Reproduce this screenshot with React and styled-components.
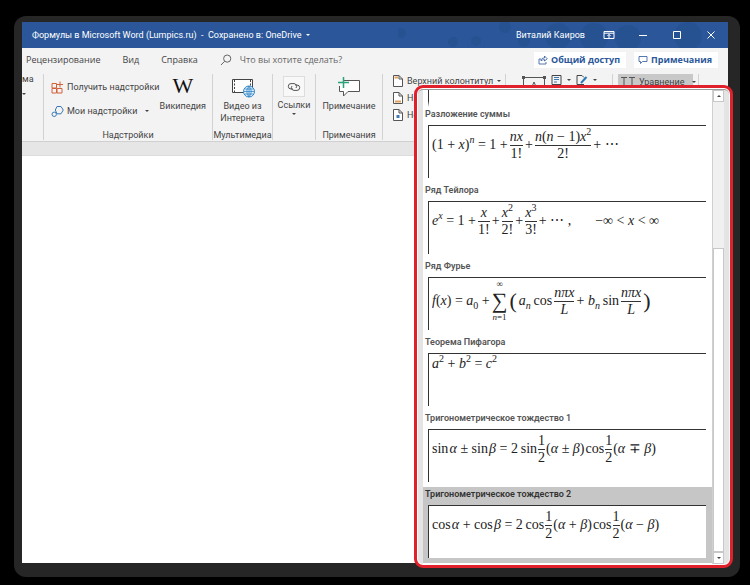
import styled, { createGlobalStyle } from "styled-components";

const tabs = ["Рецензирование", "Вид", "Справка"];

export default function App(){
    return(
    <>
        <GlobalStyle/>
        <Desktop>
            <Shadow>
                <Window>
                    <TitleBar/>
                    <TabBar/>
                    <Ribbon/>
                    <Ruler/>
                    <Page/>
                    <Gallery/>
                </Window>
            </Shadow>
        </Desktop>
    </>
    )
}

function TitleBar(){
    return(
    <Title>
        <Pattern viewBox="0 0 330 26" preserveAspectRatio="xMaxYMin slice">
            <circle cx="3" cy="11" r="5"/>
            <circle cx="55" cy="20" r="5"/>
            <circle cx="78" cy="19" r="5"/>
            <circle cx="107" cy="5" r="6"/>
            <circle cx="126" cy="19" r="6"/>
            <circle cx="160" cy="14" r="13"/>
            <circle cx="196" cy="15" r="14"/>
            <circle cx="230" cy="16" r="13"/>
            <circle cx="290" cy="14" r="14"/>
        </Pattern>
        <DocName>Формулы в Microsoft Word (Lumpics.ru)&nbsp; -&nbsp; Сохранено в: OneDrive <Caret/></DocName>
        <UserName>Виталий Каиров</UserName>
        <TitleButton aria-label="Параметры отображения ленты">
            <svg width="12" height="10" viewBox="0 0 12 10" fill="none" stroke="currentColor">
                <path d="M1 1.5h10v7H1zM1 3.2h10M6 8V4.5M4.4 6L6 4.4 7.6 6"/>
            </svg>
        </TitleButton>
        <TitleButton aria-label="Свернуть">
            <svg width="10" height="10" viewBox="0 0 10 10" stroke="currentColor"><path d="M1 5.5h8"/></svg>
        </TitleButton>
        <TitleButton aria-label="Развернуть">
            <svg width="10" height="10" viewBox="0 0 10 10" fill="none" stroke="currentColor"><path d="M1.5 1.5h7v7h-7z"/></svg>
        </TitleButton>
        <TitleButton aria-label="Закрыть">
            <svg width="10" height="10" viewBox="0 0 10 10" stroke="currentColor"><path d="M1.5 1.5l7 7M8.5 1.5l-7 7"/></svg>
        </TitleButton>
    </Title>
    )
}

function TabBar(){
    return(
    <Tabs>
        {tabs.map((tab) => <Tab key={tab}>{tab}</Tab>)}
        <Search>
            <svg width="12" height="12" viewBox="0 0 12 12" fill="none" stroke="#666"><circle cx="7.2" cy="4.6" r="3.6"/><path d="M4.6 7.3L1 11"/></svg>
            <input aria-label="Поиск" placeholder="Что вы хотите сделать?"/>
        </Search>
        <ShareButton>
            <svg width="10" height="10" viewBox="0 0 10 10" fill="none" stroke="currentColor" strokeWidth=".8"><path d="M3 4H1v5h7V7M3 6c0-2 1-3 3.500-3V1L9.300 3.800 6.500 6V4.600C5 4.600 4 5 3 6z"/></svg>
            Общий доступ
        </ShareButton>
        <ShareButton>
            <svg width="10" height="10" viewBox="0 0 10 10" fill="none" stroke="currentColor" strokeWidth=".8"><path d="M1 1.500h8v5H4.500L2.500 8.500v-2H1z"/></svg>
            Примечания
        </ShareButton>
    </Tabs>
    )
}

function PageIcon({ color, part }){
    return(
    <svg width="12" height="14" viewBox="0 0 12 14" fill="#fff" stroke="#555">
        <path d="M1.500 1.500h5.500l3.500 3.500v7.500h-9zM7 1.500V5h3.500"/>
        {part === "top" && <path d="M2.500 3.500h3.500" stroke={color} strokeWidth="2"/>}
        {part === "bottom" && <path d="M3 10.500h6" stroke={color} strokeWidth="2"/>}
        {part === "number" && <path d="M4.500 8.500h3" stroke={color} strokeWidth="3"/>}
    </svg>
    )
}

function Ribbon(){
    return(
    <RibbonBar>
        <Group $width={22}>
            <Cut>ма<Caret/></Cut>
        </Group>
        <Group $width={169}>
            <AddIns>
                <Stack $gap={10}>
                    <SmallButton>
                        <svg width="13" height="13" viewBox="0 0 13 13" fill="none" stroke="#d2603a"><path d="M1 2.500h4.500V7H1zM1 7.500h4.500V12H1zM6 7.500h5V12H6zM9 .5v6M6 3.500h6"/></svg>
                        Получить надстройки
                    </SmallButton>
                    <SmallButton>
                        <svg width="13" height="13" viewBox="0 0 13 13" fill="none" stroke="#3b78b5"><path d="M6 1.500h4L12.300 5 10 8.800H6L4.300 5z"/><circle cx="3.200" cy="9.300" r="2.200" fill="#f3f3f3"/></svg>
                        Мои надстройки
                        <Caret $left={5}/>
                    </SmallButton>
                </Stack>
                <BigButton><Wiki>W</Wiki>Википедия</BigButton>
            </AddIns>
            <GroupName>Надстройки</GroupName>
        </Group>
        <Group $width={60}>
            <BigButton>
                <svg width="24" height="22" viewBox="0 0 24 22" fill="none">
                    <path d="M1.500 3.500h20v13h-20z" fill="#fff" stroke="#444"/>
                    <path d="M3.500 4v12M19.500 4v6" stroke="#444" strokeDasharray="2 1.500"/>
                    <circle cx="18" cy="15.500" r="5.500" fill="#e8f2fb" stroke="#2e86c8"/>
                    <path d="M12.500 15.500h11M18 10v11M13.500 13h9M13.500 18h9M18 10q-4.500 5.500 0 11M18 10q4.500 5.500 0 11" stroke="#2e86c8" strokeWidth=".8"/>
                </svg>
                <span>Видео из<br/>Интернета</span>
            </BigButton>
            <GroupName>Мультимедиа</GroupName>
        </Group>
        <Group $width={43}>
            <BigButton>
                <LinkBox>
                    <svg width="14" height="10" viewBox="0 0 14 10" fill="none" stroke="#555"><path d="M6 7H4a2.700 2.700 0 010-5.400h3A2.700 2.700 0 019 6M8 3h2a2.700 2.700 0 010 5.400H7A2.700 2.700 0 015 4"/></svg>
                </LinkBox>
                Ссылки
                <Caret/>
            </BigButton>
        </Group>
        <Group $width={67}>
            <BigButton>
                <svg width="24" height="22" viewBox="0 0 24 22" fill="none">
                    <path d="M7 4.500h15.500v11H11L6.500 20v-4.500h-4V10" fill="#fff" stroke="#555"/>
                    <path d="M6.500 1v11M1 6.500h11" stroke="#29a37a" strokeWidth="1.500"/>
                </svg>
                Примечание
            </BigButton>
            <GroupName>Примечания</GroupName>
        </Group>
        <Group $width={123}>
            <Stack $gap={3}>
                <SmallButton><PageIcon part="top" color="#e0a060"/>Верхний колонтитул<Caret $left={1}/></SmallButton>
                <SmallButton><PageIcon part="bottom" color="#e0a060"/>Нижний колонтитул<Caret $left={1}/></SmallButton>
                <SmallButton><PageIcon part="number" color="#3b78b5"/>Номер страницы<Caret $left={1}/></SmallButton>
            </Stack>
            <GroupName>Колонтитулы</GroupName>
        </Group>
        <Group $width={107}>
            <TextTools>
                <svg width="24" height="20" viewBox="0 0 24 20" fill="none" stroke="#555"><path d="M1.500 3.500h21v14h-21zM9 15l3-7 3 7M10 12h4"/><path d="M0 2h3v3H0zM21 2h3v3h-3z" fill="#555" stroke="none"/></svg>
                <svg width="11" height="12" viewBox="0 0 11 12" fill="none" stroke="#444"><path d="M1 1.500h9v9H1z"/><path d="M3 3.500h5M3 5.500h5M3 8h3" stroke="#3b78b5"/></svg>
                <Caret/>
                <svg width="12" height="12" viewBox="0 0 12 12" fill="none" stroke="#444"><path d="M8 10.500H1v-9h5l2 2"/><path d="M10.500 3L5 9" stroke="#2e78b5" strokeWidth="2"/></svg>
                <Caret/>
            </TextTools>
        </Group>
        <Group $width={86}>
            <Equation>
                <svg width="14" height="11" viewBox="0 0 14 11" fill="none" stroke="#555"><path d="M0 1.500h6M3 2v8.500M1.500 10.500h3M8 1.500h6M11 2v8.500M9.500 10.500h3"/></svg>
                Уравнение
                <Caret $left={4}/>
            </Equation>
        </Group>
    </RibbonBar>
    )
}

const Frac = ({ top, bottom }) => <Fraction><span>{top}</span><span>{bottom}</span></Fraction>;
const X = () => <i>x</i>;
const AngleSum = ({ sign }) => <span>(<i>α</i> {sign} <i>β</i>)</span>;

const formulas = [
    {
        name: "Разложение суммы",
        body: () => <>
            <span>(1 + <X/>)<sup><i>n</i></sup> = 1 +</span>
            <Frac top={<i>nx</i>} bottom="1!"/>
            <span>+</span>
            <Frac top={<><i>n</i>(<i>n</i> − 1)<X/><sup>2</sup></>} bottom="2!"/>
            <span>+ ⋯</span>
        </>
    },
    {
        name: "Ряд Тейлора",
        body: () => <>
            <span><i>e</i><sup><i>x</i></sup> = 1 +</span>
            <Frac top={<X/>} bottom="1!"/>
            <span>+</span>
            <Frac top={<><X/><sup>2</sup></>} bottom="2!"/>
            <span>+</span>
            <Frac top={<><X/><sup>3</sup></>} bottom="3!"/>
            <span>+ ⋯ ,</span>
            <Condition>−∞ &lt; <X/> &lt; ∞</Condition>
        </>
    },
    {
        name: "Ряд Фурье",
        height: 46,
        body: () => <>
            <span><i>f</i>(<X/>) = <i>a</i><sub>0</sub> +</span>
            <Sum><small>∞</small><b>∑</b><small><i>n</i>=1</small></Sum>
            <Paren>(</Paren>
            <span><i>a</i><sub><i>n</i></sub>&thinsp;cos</span>
            <Frac top={<i>nπx</i>} bottom={<i>L</i>}/>
            <span>+ <i>b</i><sub><i>n</i></sub>&thinsp;sin</span>
            <Frac top={<i>nπx</i>} bottom={<i>L</i>}/>
            <Paren>)</Paren>
        </>
    },
    {
        name: "Теорема Пифагора",
        height: 20,
        body: () => <span><i>a</i><sup>2</sup> + <i>b</i><sup>2</sup> = <i>c</i><sup>2</sup></span>
    },
    {
        name: "Тригонометрическое тождество 1",
        tight: true,
        body: () => <>
            <span>sin&#8202;<i>α</i> ± sin&#8202;<i>β</i> = 2&thinsp;sin</span>
            <Frac top="1" bottom="2"/>
            <AngleSum sign="±"/>
            <span>cos</span>
            <Frac top="1" bottom="2"/>
            <AngleSum sign="∓"/>
        </>
    },
    {
        name: "Тригонометрическое тождество 2",
        selected: true,
        tight: true,
        body: () => <>
            <span>cos&#8202;<i>α</i> + cos&#8202;<i>β</i> = 2&thinsp;cos</span>
            <Frac top="1" bottom="2"/>
            <AngleSum sign="+"/>
            <span>cos</span>
            <Frac top="1" bottom="2"/>
            <AngleSum sign="−"/>
        </>
    }
];

function Gallery(){
    return(
    <Popup>
        <Inner>
            <List>
                <PreviousItem/>
                {formulas.map((f) =>
                    <Item key={f.name} $selected={f.selected}>
                        <h3>{f.name}</h3>
                        <Card><Formula $height={f.height} $tight={f.tight}>{f.body()}</Formula></Card>
                    </Item>
                )}
            </List>
            <Scroll>
                <ScrollButton aria-label="Вверх"><Caret $up/></ScrollButton>
                <Thumb/>
                <ScrollButton aria-label="Вниз"><Caret/></ScrollButton>
            </Scroll>
        </Inner>
    </Popup>
    )
}

const GlobalStyle = createGlobalStyle`
    *{
        box-sizing: border-box;
    }
    body{
        margin: 0;
        background: #000;
        font-family: Roboto, "Noto Sans", sans-serif;
        font-size: 9px;
        color: #444;
    }
    button, input{
        font: inherit;
        color: inherit;
        border: none;
        background: none;
        padding: 0;
    }
    svg{
        flex-shrink: 0;
    }
`
const Desktop = styled.main`
    min-height: 100vh;
    display: flex;
    padding: 16px 10px 8px 14px;
    overflow: hidden;
`
const Shadow = styled.div`
    flex: 1;
    min-width: 0;
    display: flex;
    padding: 6px 12px 14px 8px;
    border-radius: 12px;
    background: #262626;
`
const Window = styled.div`
    flex: 1;
    min-width: 0;
    position: relative;
    display: flex;
    flex-direction: column;
    background: #fff;
`
const Title = styled.header`
    position: relative;
    height: 26px;
    display: flex;
    align-items: center;
    background: #2b579a;
    color: #fff;
`
const Pattern = styled.svg`
    position: absolute;
    top: 0;
    right: 0;
    width: 330px;
    height: 26px;
    fill: #25508f;
    pointer-events: none;
    opacity: 0.7;
`
const DocName = styled.div`
    flex: 1;
    padding-left: 10px;
    display: flex;
    align-items: center;
    gap: 4px;
    white-space: nowrap;
`
const UserName = styled.div`
    position: relative;
    margin-right: 7px;
`
const TitleButton = styled.button`
    position: relative;
    width: 34px;
    height: 26px;
    display: flex;
    align-items: center;
    justify-content: center;
`
const Caret = styled.span`
    flex-shrink: 0;
    margin-left: ${({ $left }) => $left || 0}px;
    border: 2px solid transparent;
    ${({ $up }) => $up ? "border-bottom-color" : "border-top-color"}: currentColor;
    ${({ $up }) => $up ? "border-top-width" : "border-bottom-width"}: 0;
`
const Tabs = styled.nav`
    height: 23px;
    display: flex;
    align-items: center;
    padding: 0 10px 0 4px;
    background: #f3f3f3;
    font-family: "Open Sans", "Noto Sans", sans-serif;
    white-space: nowrap;
`
const Tab = styled.button`
    margin-right: 22px;
`
const Search = styled.label`
    flex: 1;
    display: flex;
    align-items: center;
    gap: 8px;
    input{
        flex: 1;
        min-width: 0;
    }
    input::placeholder{
        color: #666;
        opacity: 1;
    }
`
const ShareButton = styled.button`
    height: 16px;
    margin-left: 8px;
    padding: 0 6px 0 4px;
    display: flex;
    align-items: center;
    gap: 3px;
    background: #fff;
    color: #2b579a;
    font-weight: bold;
`
const RibbonBar = styled.section`
    height: 71px;
    display: flex;
    background: #f3f3f3;
    border-bottom: 1px solid #d0d0d0;
    overflow: hidden;
    white-space: nowrap;
`
const Group = styled.div`
    width: ${({ $width }) => $width}px;
    flex-shrink: 0;
    margin: 3px 0 1px;
    display: flex;
    flex-direction: column;
    justify-content: space-between;
    border-right: 1px solid #d2d2d2;
    overflow: hidden;
`
const GroupName = styled.div`
    line-height: 10px;
    text-align: center;
`
const Cut = styled.div`
    display: flex;
    flex-direction: column;
    align-items: flex-start;
    gap: 9px;
`
const AddIns = styled.div`
    display: flex;
    justify-content: space-between;
    padding: 0 6px 0 7px;
`
const Stack = styled.div`
    padding-top: ${({ $gap }) => $gap > 5 ? 6 : 0}px;
    padding-left: ${({ $gap }) => $gap > 5 ? 0 : 9}px;
    display: flex;
    flex-direction: column;
    gap: ${({ $gap }) => $gap}px;
`
const SmallButton = styled.button`
    height: 14px;
    display: flex;
    align-items: center;
    gap: 3px;
`
const BigButton = styled.button`
    display: flex;
    flex-direction: column;
    align-items: center;
    line-height: 12px;
    padding-top: 2px;
    gap: 2px;
`
const Wiki = styled.span`
    height: 22px;
    font: 22px/20px "Liberation Serif", serif;
    color: #111;
`
const LinkBox = styled.span`
    width: 22px;
    height: 21px;
    display: flex;
    align-items: center;
    justify-content: center;
    border: 1px solid #ddd;
    background: #f8f8f8;
`
const TextTools = styled.div`
    display: flex;
    align-items: flex-start;
    gap: 5px;
    padding-left: 16px;
    ${Caret}{
        margin-top: 5px;
    }
`
const Equation = styled.button`
    height: 15px;
    margin: 0 5px;
    padding-left: 3px;
    display: flex;
    align-items: center;
    gap: 4px;
    background: #c8c8c8;
`
const Ruler = styled.div`
    height: 14px;
    background: #e6e6e6;
    border-bottom: 1px solid #dcdcdc;
`
const Page = styled.article`
    flex: 1;
    background: #fff;
`
const Popup = styled.aside`
    position: absolute;
    top: 63px;
    right: -5px;
    bottom: -5px;
    width: 319px;
    border: 3px solid #e0202a;
    border-radius: 9px;
    background: #fff;
    padding: 1px;
`
const Inner = styled.div`
    height: 100%;
    display: flex;
    padding-left: 5px;
    padding-right: 5px;
    border-radius: 5px;
    border-top: 1px solid #999;
    background: #e4e4e4;
    overflow: hidden;
`
const List = styled.div`
    flex: 1;
    background: #fff;
`
const PreviousItem = styled.div`
    height: 17px;
    margin-left: 5px;
    border-left: 1px solid #333;
    border-bottom: 6px solid #fff;
`
const Item = styled.section`
    height: 76px;
    padding: 0 6px 5px 2px;
    background: ${({ $selected }) => $selected ? "#c6c6c6" : "#fff"};
    h3{
        margin: 0 0 4px;
        font-size: 9px;
        line-height: 14px;
        font-weight: 600;
        color: ${({ $selected }) => $selected ? "#333" : "#555"};
    }
`
const Card = styled.div`
    height: 53px;
    margin-left: 3px;
    border-top: 1px solid #333;
    border-left: 1px solid #333;
    background: #fff;
`
const Formula = styled.div`
    height: ${({ $height }) => $height || 38}px;
    padding-left: 3px;
    display: flex;
    align-items: center;
    gap: ${({ $tight }) => $tight ? 1 : 2}px;
    font: 14px/16px "Liberation Serif", serif;
    color: #222;
    white-space: nowrap;
    sup, sub{
        font-size: 10px;
        line-height: 0;
    }
`
const Fraction = styled.span`
    display: flex;
    flex-direction: column;
    align-items: center;
    span + span{
        align-self: stretch;
        border-top: 1px solid #333;
        text-align: center;
    }
`
const Condition = styled.span`
    margin-left: 22px;
`
const Sum = styled.span`
    display: flex;
    flex-direction: column;
    align-items: center;
    small{
        font-size: 9px;
        line-height: 9px;
    }
    b{
        font-size: 22px;
        line-height: 24px;
        font-weight: normal;
    }
`
const Paren = styled.span`
    font-size: 22px;
    line-height: 28px;
`
const Scroll = styled.div`
    width: 12px;
    display: flex;
    flex-direction: column;
    background: #f0f0f0;
    border-left: 1px solid #d0d0d0;
`
const ScrollButton = styled.button`
    height: 12px;
    display: flex;
    align-items: center;
    justify-content: center;
    background: #fff;
    border: 1px solid #c8c8c8;
`
const Thumb = styled.div`
    flex: 1;
    margin-top: 146px;
    background: #fff;
    border: 1px solid #c8c8c8;
`
